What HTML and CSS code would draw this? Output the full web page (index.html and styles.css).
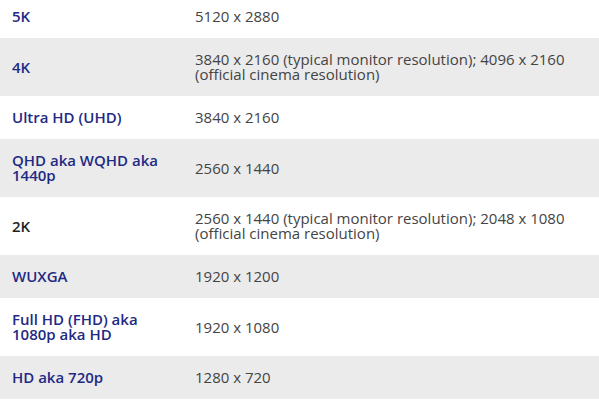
FILE: index.html
```html
<!DOCTYPE html>
<html lang="en">
<head>
<meta charset="utf-8">
<title>Resolutions</title>
<link rel="stylesheet" href="styles.css">
</head>
<body>
<table class="res-table">
  <tbody>
    <tr><th><a href="#">5K</a></th><td>5120 x 2880</td></tr>
    <tr><th><a href="#">4K</a></th><td>3840 x 2160 (typical monitor resolution); 4096 x 2160 (official cinema resolution)</td></tr>
    <tr><th><a href="#">Ultra HD (UHD)</a></th><td>3840 x 2160</td></tr>
    <tr><th><a href="#">QHD aka WQHD aka 1440p</a></th><td>2560 x 1440</td></tr>
    <tr><th>2K</th><td>2560 x 1440 (typical monitor resolution); 2048 x 1080 (official cinema resolution)</td></tr>
    <tr><th><a href="#">WUXGA</a></th><td>1920 x 1200</td></tr>
    <tr><th><a href="#">Full HD (FHD) aka 1080p aka HD</a></th><td>1920 x 1080</td></tr>
    <tr><th><a href="#">HD aka 720p</a></th><td>1280 x 720</td></tr>
  </tbody>
</table>
</body>
</html>
```
FILE: styles.css
```css
html, body {
  margin: 0;
  padding: 0;
  background: #ffffff;
}
body {
  font-family: "Open Sans", "Liberation Sans", sans-serif;
  font-size: 15px;
  line-height: 15px;
  color: #444444;
}
.res-table {
  width: 599px;
  border-collapse: collapse;
  border-spacing: 0;
  margin-top: -5px;
}
.res-table tr:nth-child(even) {
  background: #ebebeb;
}
.res-table th,
.res-table td {
  padding: 14px 12px;
  vertical-align: middle;
  text-align: left;
}
.res-table th {
  width: 159px;
  font-weight: 600;
  color: #222222;
}
.res-table th a {
  color: #1f2a84;
  text-decoration: none;
}
.res-table td {
  font-weight: 400;
  color: #444444;
}
```
